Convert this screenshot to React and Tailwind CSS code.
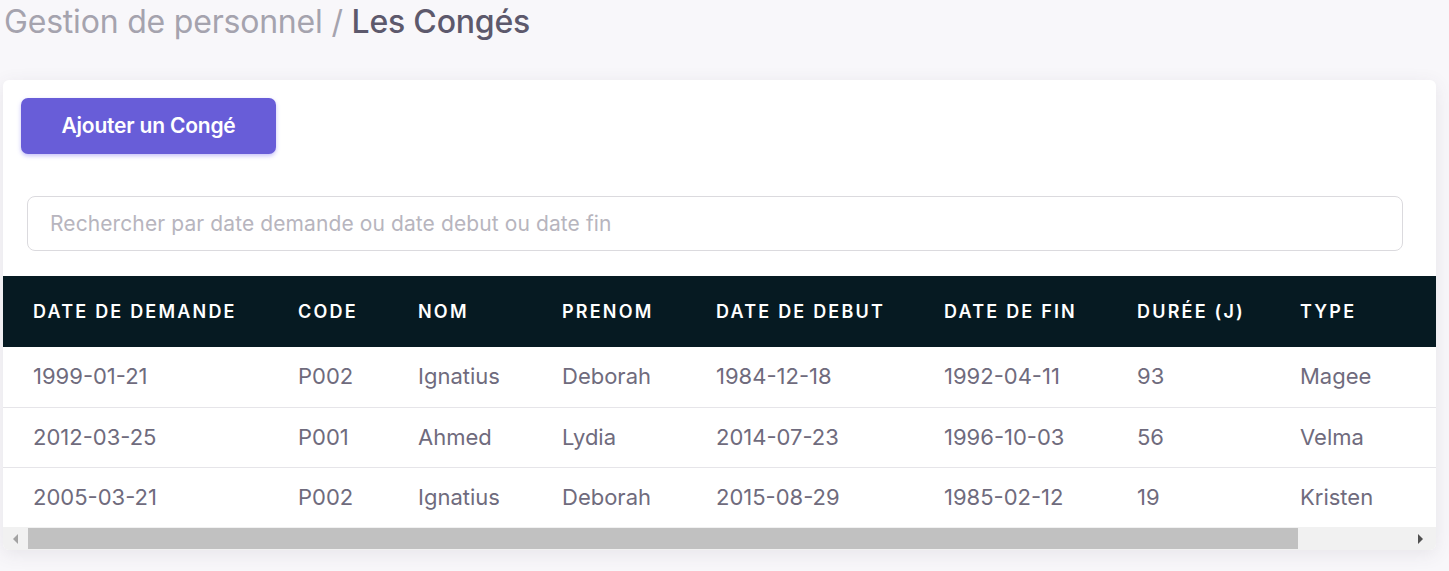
import React from "react";

const cols = [
  { label: "Date de demande", w: "w-[265px]" },
  { label: "Code", w: "w-[120px]" },
  { label: "Nom", w: "w-[144px]" },
  { label: "Prenom", w: "w-[154px]" },
  { label: "Date de debut", w: "w-[228px]" },
  { label: "Date de fin", w: "w-[193px]" },
  { label: "Durée (j)", w: "w-[163px]" },
  { label: "Type", w: "w-[135px]" },
  { label: "", w: "w-[178px]" },
];

const rows = [
  ["1999-01-21", "P002", "Ignatius", "Deborah", "1984-12-18", "1992-04-11", "93", "Magee", ""],
  ["2012-03-25", "P001", "Ahmed", "Lydia", "2014-07-23", "1996-10-03", "56", "Velma", ""],
  ["2005-03-21", "P002", "Ignatius", "Deborah", "2015-08-29", "1985-02-12", "19", "Kristen", ""],
];

export default function App() {
  return (
    <div
      className="w-[1449px] h-[571px] overflow-hidden bg-[#f8f7fa]"
      style={{ fontFamily: "Inter, 'Noto Sans', sans-serif" }}
    >
      <h1 className="h-[44px] pl-[4px] pt-[1px] text-[32px] leading-[42px] tracking-[-0.2px]">
        <span className="text-[#a5a3ae]">Gestion de personnel / </span>
        <span className="text-[#5d596c] font-medium">Les Congés</span>
      </h1>
      <div className="ml-[3px] mt-[36px] w-[1433px] bg-white rounded-[6px] shadow-[0_4px_18px_rgba(75,70,92,0.1)] overflow-hidden">
        <div className="pl-[18px] pt-[18px]">
          <button className="w-[255px] h-[56px] rounded-[7px] bg-[#685dd8] text-white text-[21px] font-semibold tracking-[-0.2px] shadow-[0_2px_4px_rgba(115,103,240,0.4)]">
            Ajouter un Congé
          </button>
        </div>
        <div className="pl-[24px] pr-[33px] pt-[42px]">
          <div className="h-[55px] border border-[#dbdade] rounded-[8px] flex items-center pl-[22px] text-[21px] tracking-[0.1px] text-[#b7b5be]">
            Rechercher par date demande ou date debut ou date fin
          </div>
        </div>
        <div className="mt-[25px] overflow-hidden">
          <table className="table-fixed border-collapse w-[1580px]">
            <thead>
              <tr className="bg-[#061a22] h-[71px]">
                {cols.map((c, k) => (
                  <th
                    key={k}
                    className={`${c.w} text-left pl-[30px] text-white uppercase font-semibold text-[18px] tracking-[2.2px] whitespace-nowrap`}
                  >
                    {c.label}
                  </th>
                ))}
              </tr>
            </thead>
            <tbody>
              {rows.map((r, i) => (
                <tr
                  key={i}
                  className={`h-[60px] ${i < rows.length - 1 ? "border-b border-[#e6e5e9]" : ""}`}
                >
                  {r.map((v, j) => (
                    <td
                      key={j}
                      className="pl-[30px] text-[22px] text-[#6f6b7d] whitespace-nowrap"
                    >
                      {v}
                    </td>
                  ))}
                </tr>
              ))}
            </tbody>
          </table>
        </div>
        <div className="h-[23px] bg-[#f1f1f1] flex items-center">
          <div className="w-[25px] flex justify-center">
            <svg width="8" height="12" viewBox="0 0 8 12">
              <path d="M6 1 L1 6 L6 11 Z" fill="#a3a3a3" />
            </svg>
          </div>
          <div className="w-[1270px] h-[21px] bg-[#c1c1c1]" />
          <div className="flex-1" />
          <div className="w-[32px] flex justify-center">
            <svg width="8" height="12" viewBox="0 0 8 12">
              <path d="M2 1 L7 6 L2 11 Z" fill="#505050" />
            </svg>
          </div>
        </div>
      </div>
    </div>
  );
}
